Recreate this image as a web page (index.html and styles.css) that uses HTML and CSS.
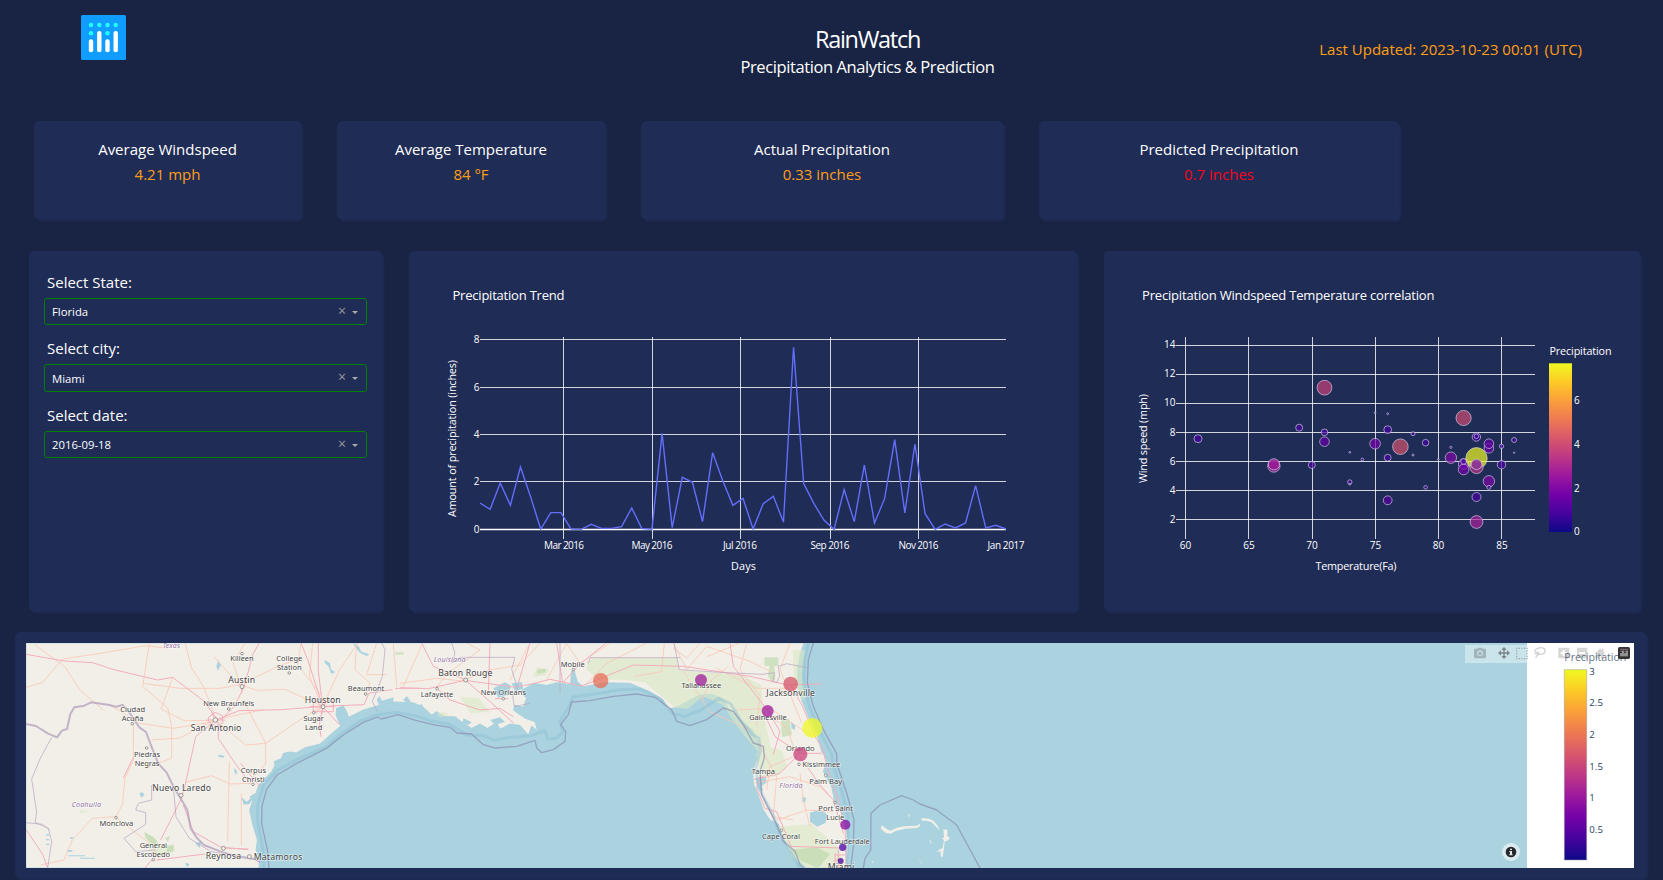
FILE: index.html
```
<!DOCTYPE html>
<html lang="en">
<head>
<meta charset="utf-8">
<title>RainWatch</title>
<link rel="stylesheet" href="styles.css">
</head>
<body>
<header class="header">
  <svg class="logo" viewBox="0 0 45 45" width="45" height="45">
    <rect width="45" height="45" rx="1.5" fill="#119dff"/>
    <g fill="#25fefd"><circle cx="10" cy="10" r="2.2"/><circle cx="18.3" cy="10" r="2.2"/><circle cx="26.5" cy="10" r="2.2"/><circle cx="34.7" cy="10" r="2.2"/><circle cx="10" cy="18.3" r="2.2"/><circle cx="26.5" cy="18.3" r="2.2"/></g>
    <g fill="#fff"><rect x="7.8" y="24.3" width="4.4" height="13" rx="2.1"/><rect x="16.1" y="16" width="4.4" height="21.3" rx="2.1"/><rect x="24.3" y="24.3" width="4.4" height="13" rx="2.1"/><rect x="32.5" y="16" width="4.4" height="21.3" rx="2.1"/></g>
  </svg>
  <div class="titles"><h1>RainWatch</h1><h2>Precipitation Analytics &amp; Prediction</h2></div>
  <div class="updated">Last Updated: 2023-10-23 00:01 (UTC)</div>
</header>

<section class="stats">
  <div class="card stat"><p>Average Windspeed</p><p class="amber">4.21 mph</p></div>
  <div class="card stat"><p>Average Temperature</p><p class="amber">84 °F</p></div>
  <div class="card stat"><p>Actual Precipitation</p><p class="amber">0.33 inches</p></div>
  <div class="card stat"><p>Predicted Precipitation</p><p class="red">0.7 inches</p></div>
</section>

<main class="panels">
  <div class="card filters">
    <label>Select State:</label>
    <div class="select"><span>Florida</span><i class="clear">×</i><i class="arrow"></i></div>
    <label>Select city:</label>
    <div class="select tall"><span>Miami</span><i class="clear">×</i><i class="arrow"></i></div>
    <label>Select date:</label>
    <div class="select"><span>2016-09-18</span><i class="clear">×</i><i class="arrow"></i></div>
  </div>

  <div class="card">
    <svg class="chart" viewBox="409 251 668 360" width="668" height="360">
      <text class="chart-title" x="452.5" y="300" textLength="112">Precipitation Trend</text>
      <path class="grid" d="M480 339.5H1006M480 387.5H1006M480 434.5H1006M480 481.5H1006M563.5 337V539M652.5 337V539M740.5 337V539M830.5 337V539M918.5 337V539"/>
      <path class="zero" d="M480 529.5H1006"/>
      <polyline class="trend" transform="translate(480 240) scale(10.115 .33333)" points="0,789 1,808 2,729 3,796 4,681 5,770 6,867 7,818 8,818 9,867 10,868 11,853 12,865 13,865 14,860 15,804 16,866 17,868 18,580 19,863 20,712 21,727 22,845 23,638 24,722 25,796 26,775 27,867 28,791 29,769 30,846 31,322 32,731 33,790 34,840 35,868 36,749 37,845 38,675 39,849 40,776 41,599 42,819 43,612 44,821 45,868 46,852 47,864 48,849 49,737 50,864 51,856 52,867"/>
      <g class="tick end"><text x="479.5" y="343">8</text><text x="479.5" y="390.5">6</text><text x="479.5" y="438">4</text><text x="479.5" y="485">2</text><text x="479.5" y="533">0</text></g>
      <g class="tick mid"><text x="564" y="549" textLength="40">Mar 2016</text><text x="652" y="549" textLength="41">May 2016</text><text x="740" y="549" textLength="34">Jul 2016</text><text x="830" y="549" textLength="39">Sep 2016</text><text x="918.5" y="549" textLength="40">Nov 2016</text><text x="1006" y="549" textLength="37">Jan 2017</text></g>
      <text class="axis mid" x="743.5" y="570" textLength="25">Days</text>
      <text class="axis mid" transform="translate(456 438.5) rotate(-90)" textLength="157">Amount of precipitation (inches)</text>
    </svg>
  </div>

  <div class="card">
    <svg class="chart" viewBox="1104 251 536 360" width="536" height="360">
      <defs><linearGradient id="plasma" x1="0" y1="1" x2="0" y2="0">
        <stop offset="0" stop-color="#0d0887"/><stop offset=".111" stop-color="#46039f"/><stop offset=".222" stop-color="#7201a8"/><stop offset=".333" stop-color="#9c179e"/><stop offset=".444" stop-color="#bd3786"/><stop offset=".556" stop-color="#d8576b"/><stop offset=".667" stop-color="#ed7953"/><stop offset=".778" stop-color="#fb9f3a"/><stop offset=".889" stop-color="#fdca26"/><stop offset="1" stop-color="#f0f921"/>
      </linearGradient></defs>
      <text class="chart-title" x="1142" y="300" textLength="292.5">Precipitation Windspeed Temperature correlation</text>
      <path class="grid" d="M1176 345.5H1535M1176 374.5H1535M1176 403.5H1535M1176 432.5H1535M1176 461.5H1535M1176 490.5H1535M1176 519.5H1535M1185.5 337V539M1248.5 337V539M1312.5 337V539M1375.5 337V539M1438.5 337V539M1501.5 337V539"/>
      <g class="dots" fill="#46039f">
        <circle cx="1198" cy="438.7" r="4"/>
        <circle cx="1273.9" cy="466" r="6.2" fill="#a8249a"/><circle cx="1273.9" cy="464.3" r="5.6" fill="#a01a9c"/>
        <circle cx="1299.2" cy="427.7" r="3.5"/><circle cx="1311.8" cy="465" r="3.5"/>
        <circle cx="1324.5" cy="387.7" r="7.4" fill="#c9427a"/><circle cx="1324.5" cy="432.3" r="3.3"/><circle cx="1324.5" cy="441.7" r="4.8" fill="#6400a7"/>
        <circle cx="1349.8" cy="452.3" r=".9"/><circle cx="1349.8" cy="482" r="2.2"/><circle cx="1349.8" cy="484.3" r=".9"/><circle cx="1362.4" cy="459.5" r="1.4"/>
        <circle cx="1375.1" cy="412.7" r=".8"/><circle cx="1375.1" cy="443.7" r="5.3" fill="#7201a8"/>
        <circle cx="1387.7" cy="413.7" r=".9"/><circle cx="1387.7" cy="429.7" r="3.9"/><circle cx="1387.7" cy="457.7" r="3.4"/><circle cx="1387.7" cy="500.3" r="4.4" fill="#5402a3"/>
        <circle cx="1400.4" cy="446.7" r="7.8" fill="#d5536f"/>
        <circle cx="1413" cy="433.7" r="2"/><circle cx="1413" cy="455" r="1"/><circle cx="1425.6" cy="442.7" r="3.3"/><circle cx="1425.6" cy="487.3" r="1.8"/>
        <circle cx="1438.3" cy="459.3" r=".9"/><circle cx="1450.9" cy="447.3" r="1.1"/><circle cx="1450.9" cy="457.7" r="5.7" fill="#7e08a5"/>
        <circle cx="1463.6" cy="418" r="7.6" fill="#cf4c74"/><circle cx="1463.6" cy="464" r="5.2" fill="#6a00a8"/><circle cx="1463.6" cy="461.5" r="2.8"/><circle cx="1463.6" cy="469.5" r="5.3" fill="#7201a8"/>
        <circle cx="1476.4" cy="437" r="4.2"/><circle cx="1476.4" cy="436.3" r="2.3"/>
        <circle cx="1476.5" cy="458.3" r="10.7" fill="#f0f921"/><circle cx="1476.5" cy="467" r="6.6" fill="#b83289"/><circle cx="1476.5" cy="464.3" r="5.3" fill="#7e2aa0"/>
        <circle cx="1476.5" cy="497" r="4.5"/><circle cx="1476.5" cy="522" r="6.4" fill="#a8229a"/>
        <circle cx="1488.9" cy="448.3" r="4.8" fill="#6400a7"/><circle cx="1488.9" cy="443.7" r="4.8" fill="#6400a7"/><circle cx="1488.9" cy="481.3" r="5.7" fill="#7e08a5"/><circle cx="1488.9" cy="487.3" r="2"/>
        <circle cx="1501.5" cy="446.3" r="2.2"/><circle cx="1501.5" cy="464.7" r="4.2"/><circle cx="1514.1" cy="440" r="2.5"/><circle cx="1514.1" cy="452.7" r=".7"/>
      </g>
      <g class="tick end"><text x="1175.5" y="348">14</text><text x="1175.5" y="377">12</text><text x="1175.5" y="406">10</text><text x="1175.5" y="436">8</text><text x="1175.5" y="465">6</text><text x="1175.5" y="494">4</text><text x="1175.5" y="523">2</text></g>
      <g class="tick mid"><text x="1185.5" y="549">60</text><text x="1249" y="549">65</text><text x="1312" y="549">70</text><text x="1375.5" y="549">75</text><text x="1438.5" y="549">80</text><text x="1502" y="549">85</text></g>
      <text class="axis mid" x="1356" y="570" textLength="81">Temperature(Fa)</text>
      <text class="axis mid" transform="translate(1147 438.5) rotate(-90)" textLength="89">Wind speed (mph)</text>
      <text class="axis" x="1549.5" y="355" textLength="62">Precipitation</text>
      <rect x="1549" y="363.3" width="23" height="168.7" fill="url(#plasma)"/>
      <g class="tick"><text x="1574" y="403.5">6</text><text x="1574" y="447.5">4</text><text x="1574" y="491.5">2</text><text x="1574" y="535">0</text></g>
    </svg>
  </div>
</main>

<section class="card map-card">
<svg class="map" viewBox="78 69 4824 675" width="1608" height="225">
  <rect x="78" y="69" width="4824" height="675" fill="#aad3df"/>
  <!-- mainland -->
  <g class="land">
    <path d="M78 69V744H777L779 715 768 690 772 660 757 610 749 570 757 545 750 530 768 520 776 495 800 470 815 455 825 435 822 425 845 415 850 400 870 396 890 398 915 383 960 372 990 345 1022 318 1008 285 1010 265 1030 258 1040 275 1045 292 1090 270 1130 258 1160 245 1240 248 1270 262 1295 285 1310 275 1335 290 1365 290 1390 310 1415 325 1440 312 1462 325 1490 308 1500 328 1530 312 1560 316 1585 345 1595 318 1612 332 1605 305 1575 295 1540 270 1545 255 1570 262 1580 235 1560 215 1600 190 1640 196 1670 188 1712 194 1714 155 1722 150 1732 185 1750 200 1820 188 1890 190 1950 215 1990 240 2003 268 2030 262 2070 240 2100 225 2135 222 2165 235 2190 270 2230 310 2258 330 2272 365 2275 400 2258 450 2260 490 2272 520 2290 570 2310 600 2335 612 2345 640 2360 680 2390 715 2420 744H2538L2545 690 2540 630 2525 580 2503 540 2495 500 2470 455 2482 415 2465 395 2450 340 2425 290 2405 240 2393 190 2393 150 2400 105 2412 69Z"/>
  </g>
  <!-- bays and lakes -->
  <g fill="#aad3df">
    <path d="M655 121l8 14-10 17-4-15zM418 520l8-3 8 7-10 9zM655 404l18 3-3 6-14-3zM1058 69l18 10 8 16 24 8-7 5-22-10zM975 120l15 10 3 18 13 8-12 6-8-22-12-12zM1565 210l22-12 80 0 30 10-25 10-30 8-15 20-40 12 8-25zM1480 205l35-18 18 10-8 28-30 8zM1535 190l30-4 5 20-25 8zM1240 260l25-8 6 12-18 10zM1390 295l25 12-10 8-18-6zM1470 300l30-8 15 14-30 8zM1130 240l8-12 8 14 35-10-2 16-40 10zM1210 240l10-12 12 16-10 6z"/>
    <path d="M724 530l15 15 20-15-10 22-18 2zM586 670l18-6-5 20zM205 706h50v3h-50zM240 713h45v3h-45zM202 690h15v5h-15zM138 643h9v4h-9zM138 657h9v4h-9zM138 671h9v4h-9zM210 652h10v4h-10zM2430 578l30-10 22 15-5 25-25 12-22-15zM2268 478l28-8 5 16-15 12 3 16-12-5zM2373 305l12 10v15l-10-5zM2408 530l10 4-3 14-9-5zM2468 395l18 10-3 22-10-15zM703 445l8 8-2 12-6-8zM555 728l14 4-8 10z"/>
  </g>
  <!-- woodland -->
  <g fill="#d9e8c4" opacity=".6">
    <path d="M1762 125l20-11H2030l8 37 185 14 60 30 10 100 20 90-30 20-40-45-45-60-30-46-60-25-45 38-40-5-35-30-55-45-65-8-70 0-38-30zM2268 400l40-20 38 12 15 45-30 30-50 10zM2378 90h38l-10 80 15 60-16 10-22-50zM2335 620l100-8 80 70 20 62h-115l-45-32z"/>
    <path d="M435 635l30 18 18 30 38-12 3 25-60 15-14-25zM1380 230l55 5 35 40-60 5zM1612 140l35 10-10 15-38 5zM1310 280l25-4 10 10-25 6zM235 570l28 3-2 5-20 0z"/>
  </g>
  <g fill="#b9d7a8" opacity=".6"><path d="M2293 112h42v26h-12l3 40-12 12-10-24 4-28h-15zM2343 300l25-4 8 50-30 5zM2370 690l80-8 40 20-35 42-50-20zM432 635l30 18 18 25-22-5-22-20zM495 655l15-8-6 20zM500 678l22-2-2 18-20 4zM1185 97h26v7h-24zM1612 150l26-4-2 10-24 6z"/></g>
  <!-- secondary roads -->
  <g class="minor">
    <path d="M78 202l50-15 60-70 100-15 150-25 65 8M105 75l90 65 45 70 70 60M448 69l-20 130 75 65 12 55 0 95-75 30M430 190l110 15h120l55-10 130-60 58-20M518 172l-35 95 70 35h72M555 69l20 75 35 55 20 50 17 50M330 255l90 55 100 15 122-20M455 360l85-6 105-55 145-30M647 300l90 75 60-5 95-65 70-45M735 69l-35 60 20 65 50 17 85-3 110 50M722 200l-80-90M735 250l62 120v60l-45 50M688 425l-5 240M724 520l0 155M555 487l80-20 55 25 65-2M400 310v110l-25 55-8 80-20 35-70 5-60 65-25 60-70 15M348 592l110 85 20 45M903 69l-10 65 70 90M968 260l-40-90 10-100M968 260l50-110 55-80M1070 69l-5 80 45 40-12 35M1130 69l-30 95 60 0M1180 69l10 130M1210 200l55-125M1200 190l110-15 95 10M1310 200l40-45 90-65-40-21M1390 180l80-30 90-15 60-66M1530 180l60-110M1640 180l60-110 40 60 90-61M1760 190l60-60 120-61M1900 170l85-15 8-86M2020 69l40 80 60-70 130 45 60 30M2100 69l-40 45-40-30M2120 110l100-41M2185 140l-50 40-30 60M2240 69l-20 80 60 80-10 90M2150 145l120 60 100 0M2050 155l80 120 120 55M2210 270l100-5 60 40 60 40M2290 280l70 40 30 90M2270 360l60 110-10 120 60 10M2260 490l110-20 90 30 30 30M2300 510l10-70 70-30M2400 460l10 80 20 80M2330 600l90-30 80 5M2370 69l-30 80 35 85 30 75"/>
  </g>
  <!-- main roads -->
  <g class="major">
    <path d="M78 103l115 20 85 5 60 20 135 32 45-8 55 42 40 30 35 50M778 69l-20 35-25 95-30 60-40 40M647 300l70-28 130-3 120-10 125-5 15-35 70-10M955 69v85l13 105 50 55M903 69l20 50 45 140M968 260l-10 55 5 35M647 300l-60 50-35 160-10 30-60 120M655 320v35l50 75 45 60M780 500l-58-70M78 628l50 75 15 40M400 412l-30 62M455 720l-20 24M470 720l145-18M550 555l30 80 85 48 80 5M670 683l75 5M1200 203l85 3 110-25 145 20 50-8 60-15 95 20 45-18 110-45 150 4 200 30 110 25 105-2M1310 205l40 35 90 30 60-5 40 25M1396 180l80 70 65 60M1265 69l35 70 95 40M1470 69l-5 150M1590 69l-35 120M1670 69l18 120 50-55 80-65M1185 205h75M2190 69l10 70 105 135 35 60-20 70M2373 195l35 65 40 95 20 30 15 65 30 85 22 85 5 140M2290 275l35 75 75 50 65 0M2400 400l-60 60-60 15-10 30 25 60 35 10 25 60 18 44 145 5M2400 410l60 85 40 45 30 100"/>
    <path d="M940 245h60v30h-60zM930 260h75M968 235v45M945 240l45 42M945 280l45-42M625 292l20-15 22 10 2 22-20 10-22-12zM725 190v30M620 300h55M635 278l25 45M2505 700v44M2515 690v54M2505 705h30M2505 720h25M1485 236h40M2262 478l28-8"/>
  </g>
  <!-- borders -->
  <g class="border">
    <path class="thick" d="M78 312l30 6 35 22 28 12 15-20 15-5 10-45 12-20 30-5 20-10 55 8 20 5 20-5 20 22 30 45 20 14 15 40 22 55 25 27 22 45 20 32 20 35 10 55 20 30 20 20 50 20 40 12 60 10 20 10"/>
    <path d="M155 352l-35 65-25 60 15 100-5 30 40 18 10 40-12 79M78 608l50 5 20 16M455 495l0 45-40 10-8 20 30 8 0 35-65 42 35 40 60-5M520 500l8 90 40 65 65 40 60 10M1145 69l10 20-8 80-15 40-15 35 15 30M1355 69l10 30-10 30 25-17h165l-10 35 18 60-15 18 5 35 45-10M1680 69v150M1765 130l5-17h270M2022 69l16 80 120 8 130 6 35-5-4 25 10 6 10-20-4-30 25-8 60 12"/>
  </g>
  <!-- territorial waters -->
  <g class="border">
    <path class="shelf" d="M792 744l-4-60-15-80 0-50 18-60 40-42 60-33 90-40 45-40 60-38 42-16 60-8 56 10 50 16 50 8 60 35 45 0 35 15 35-8 75-6 40-15 10 25 25-2 20-20-10-30 30-50 10-24 70-10 70-12 60-2 60 28 38 45 35 10 50-20 55-35 35 16 30 50 35 42 20 12 3 40-12 45 6 60 45 85 22 60 28 45 30 55M2425 69l-12 55-2 70 18 68 30 70 38 75v20l28 85 20 80-2 80-4 70"/>
    <path class="coast" d="M807 744l-4-50-18-84 1-52 14-50 31-43 59-35 90-45 50-40 60-38 42-16 12 6 50-13 56 18 50 12 50 8 20 17 45 3 35 32 35 10 65-5 55-18 5 23 15 14 35-9 35-25 2-30-15-20 23-30 10-38 55-4 70-13 70-7 55 10 50 37 15 35 40 13 50-18 50-35 30 10 30 40 30 55 30 10 3 35-13 40 5 70 45 90 20 50 35 30 15 40 20 20 15 1"/>
    <path class="coast" d="M2440 69l-15 50-3 70 18 70 30 70 40 72v28l30 90 22 81-2 80-8 64M2590 744l5-29 17-25 1-110 27-25 65-28 35 13 20 12 50 18 60 45 70 129"/>
  </g>
  <!-- islands -->
  <g fill="#f2efe9"><path d="M2645 616l14 10 12 6 18-8 22-5 40-2 8-6 2 6-10 7-36 2-26 6-18 9-14-2-14-12zM2764 594l22 2 14 6 12 14 8 16-14-14-12-12-14-4-14 0zM2830 628l12 2 0 18 8 6-8 8-8 2-2 20-4 28-6-4 0-14-12 2 10-8 8-4 4-24-6-4 6-4z"/><path d="M2724 582l4 0 2 8-4 0zM2788 658l4 2 4 12-4-2zM2756 720l4 2 8 10-4-2zM2615 722l4 2 2 6-4-2z" opacity=".8"/></g>
  <!-- place markers -->
  <g fill="#f2efe9" stroke="#888" stroke-width="2.5"><circle cx="726" cy="200" r="6"/><circle cx="646" cy="300" r="7"/><circle cx="969" cy="260" r="6"/><circle cx="543" cy="526" r="6"/><circle cx="670" cy="685" r="6"/><circle cx="748" cy="710" r="6"/><circle cx="1397" cy="180" r="6"/><circle cx="726" cy="101" r="4"/><circle cx="868" cy="159" r="4"/><circle cx="686" cy="267" r="4"/><circle cx="397" cy="311" r="4"/><circle cx="440" cy="384" r="4"/><circle cx="348" cy="593" r="4"/><circle cx="460" cy="719" r="4"/><circle cx="759" cy="493" r="4"/><circle cx="941" cy="278" r="4"/><circle cx="1097" cy="222" r="4"/><circle cx="1311" cy="206" r="4"/><circle cx="1510" cy="236" r="4"/><circle cx="1720" cy="149" r="4"/><circle cx="2397" cy="433" r="4"/><circle cx="2477" cy="466" r="4"/><circle cx="2505" cy="548" r="4"/><circle cx="2344" cy="631" r="4"/></g>
  <!-- place names -->
  <g class="city big">
    <text x="725" y="188" textLength="80">Austin</text><text x="648" y="332" textLength="152">San Antonio</text><text x="968" y="248" textLength="108">Houston</text><text x="545" y="514" textLength="176">Nuevo Laredo</text><text x="670" y="718" textLength="106">Reynosa</text><text x="834" y="719" textLength="146">Matamoros</text><text x="1396" y="167" textLength="163">Baton Rouge</text><text x="2372" y="227" textLength="146">Jacksonville</text><text x="2523" y="751" textLength="80">Miami</text>
  </g>
  <g class="city">
    <text x="726" y="124" textLength="70">Killeen</text><text x="868" y="123" textLength="78">College</text><text x="868" y="150" textLength="74">Station</text><text x="686" y="258" textLength="153">New Braunfels</text><text x="398" y="276" textLength="74">Ciudad</text><text x="398" y="303" textLength="65">Acuña</text><text x="441" y="411" textLength="78">Piedras</text><text x="441" y="438" textLength="74">Negras</text><text x="349" y="618" textLength="101">Monclova</text><text x="460" y="683" textLength="82">General</text><text x="460" y="710" textLength="101">Escobedo</text><text x="760" y="458" textLength="76">Corpus</text><text x="760" y="485" textLength="68">Christi</text><text x="941" y="304" textLength="61">Sugar</text><text x="941" y="331" textLength="52">Land</text><text x="1098" y="213" textLength="109">Beaumont</text><text x="1311" y="232" textLength="98">Lafayette</text><text x="1510" y="226" textLength="136">New Orleans</text><text x="1718" y="141" textLength="72">Mobile</text><text x="2104" y="205" textLength="119">Tallahassee</text><text x="2304" y="299" textLength="113">Gainesville</text><text x="2401" y="394" textLength="86">Orlando</text><text x="2464" y="440" textLength="114">Kissimmee</text><text x="2290" y="463" textLength="70">Tampa</text><text x="2477" y="493" textLength="98">Palm Bay</text><text x="2507" y="574" textLength="104">Port Saint</text><text x="2506" y="601" textLength="54">Lucie</text><text x="2343" y="658" textLength="114">Cape Coral</text><text x="2527" y="673" textLength="165">Fort Lauderdale</text>
  </g>
  <g class="city state"><text x="514" y="83" textLength="52">Texas</text><text x="259" y="562" textLength="88">Coahuila</text><text x="1349" y="126" textLength="96">Louisiana</text><text x="2373" y="503" textLength="70">Florida</text></g>
  <!-- readings -->
  <g opacity=".75"><circle cx="1802" cy="182" r="23" fill="#e76f5a"/><circle cx="2103" cy="180" r="18" fill="#a11b9b"/><circle cx="2372" cy="192" r="22" fill="#d8576b"/><circle cx="2303" cy="273" r="18" fill="#a11b9b"/><circle cx="2437" cy="324" r="30" fill="#f0f921"/><circle cx="2401" cy="403" r="21" fill="#c9437b"/><circle cx="2536" cy="614" r="15" fill="#8a0ba4"/><circle cx="2528" cy="682" r="11" fill="#4c02a1"/><circle cx="2522" cy="723" r="9" fill="#46039f"/></g>
  <!-- legend -->
  <rect x="4581" y="69" width="321" height="675" fill="#fff"/>
  <rect x="4395" y="75" width="186" height="54" fill="#fff" opacity=".38"/>
  <rect x="4693" y="149" width="67" height="571" fill="url(#plasma)" stroke="#999" stroke-opacity=".5" stroke-width="3"/>
  <g class="legend-label"><text x="4768" y="164">3</text><text x="4768" y="257">2.5</text><text x="4768" y="353">2</text><text x="4768" y="449">1.5</text><text x="4768" y="543">1</text><text x="4768" y="638">0.5</text></g>
  <text class="legend-title" x="4693" y="123" textLength="186">Precipitation</text>
  <!-- toolbar -->
  <g transform="translate(4260 0)" fill="#444">
    <path opacity=".3" fill-rule="evenodd" d="M162 90q0-4 4-4h6l2-3h12l2 3h6q4 0 4 4v21q0 4-4 4h-28q-4 0-4-4zM180 91a9 9 0 1 0 .1 0zM180 95a5.500 5.500 0 1 1-.1 0z"/>
    <path opacity=".22" fill-rule="evenodd" d="M415 83h33v32h-33zM428 90v6h-6v6h6v6h6v-6h6v-6h-6v-6zM471 83h31v32h-31zM477 96v6h18v-6zM525 101l15-16 6 6v-5h5v10l5 5h-4v14h-9v-10h-7v10h-9v-14z"/>
    <path opacity=".35" d="M288 83h4v4h-4zM296 83h4v4h-4zM304 83h4v4h-4zM312 83h4v4h-4zM320 83h4v4h-4zM288 91h4v4h-4zM288 99h4v4h-4zM288 107h4v4h-4zM288 114h4v4h-4zM296 114h4v4h-4zM304 114h4v4h-4zM312 114h4v4h-4zM320 114h4v4h-4zM320 91h4v4h-4zM320 99h4v4h-4zM320 107h4v4h-4z"/>
    <path opacity=".25" fill="none" stroke="#444" stroke-width="4" d="M349 103q-9-8-1-15 12-9 25-2 6 9-3 15-9 4-17 1-6-6 1-5 5 2 0 7-5 4-7 9"/>
    <path opacity=".6" d="M252 81l8 9h-6v7h7v-6l9 8-9 8v-6h-7v7h6l-8 9-8-9h6v-7h-7v6l-9-8 9-8v6h7v-7h-6z"/>
  </g>
  <rect x="4854" y="81" width="36" height="36" rx="5" fill="#333"/>
  <path d="M4863 99v10M4869 92v17M4875 99v10M4881 92v17" stroke="#eee" stroke-width="3"/><path d="M4862 88h22M4862 94h3M4874 94h3" stroke="#d59bb3" stroke-width="3" stroke-dasharray="3 3"/>
  <circle cx="4533" cy="696" r="27" fill="#fff" opacity=".55"/><circle cx="4533" cy="696" r="16" fill="#282828"/><path d="M4530 686h6v4h-6zM4528 693h8v10h2v3h-10v-3h2v-7h-2z" fill="#dbeaf0"/>
</svg>
</section>
</body>
</html>
```
FILE: styles.css
```
* { box-sizing: border-box; }
body {
  margin: 0;
  width: 1663px;
  height: 880px;
  overflow: hidden;
  background: #192444;
  color: #fff;
  font-family: "Open Sans", "Noto Sans", sans-serif;
}
h1, h2, p { margin: 0; font-weight: 400; }
.card {
  background: #1f2c56;
  border-radius: 5px;
  box-shadow: 2px 2px 2px #1f2c56;
}

.header {
  display: grid;
  grid-template-columns: 1fr 400px 1fr;
  height: 121px;
  padding: 15px 81px 0 81px;
}
.logo { display: block; }
.titles { text-align: center; padding: 8px 0 0 72px; white-space: nowrap; }
.titles h1 { font-size: 23.5px; line-height: 32px; letter-spacing: -1.3px; }
.titles h2 { font-size: 16.5px; line-height: 24px; letter-spacing: -0.4px; }
.updated { color: #ff9f14; font-size: 15px; line-height: 24px; padding-top: 22px; text-align: right; }

.stats {
  display: grid;
  grid-template-columns: 267px 268px 362px 360px;
  column-gap: 36px;
  padding-left: 34px;
  height: 98px;
}
.stat { padding-top: 16px; text-align: center; font-size: 15px; line-height: 25px; }
.amber { color: #ff9f14; }
.red { color: #f5061d; }

.panels {
  display: grid;
  grid-template-columns: 353px 668px 536px;
  column-gap: 27px;
  height: 360px;
  margin: 32px 0 0 29px;
}
.filters { padding: 18px 15px 0 15px; }
.filters label { display: block; height: 29px; padding-left: 3px; font-size: 15px; line-height: 26px; }
.select {
  display: flex;
  align-items: center;
  height: 27px;
  margin-bottom: 10px;
  padding: 0 8px 0 7px;
  border: 1px solid green;
  border-radius: 3px;
  font-size: 11.3px;
}
.select.tall { height: 28px; }
.select span { flex: 1; }
.clear { width: 14px; color: #999; font-style: normal; font-size: 14px; line-height: 20px; margin-top: -2px; }
.arrow { border: 3px solid transparent; border-top-color: #aaa; border-bottom: 0; margin-top: 1px; }

.chart { display: block; }
.chart text { fill: #fff; }
.chart-title { font-size: 13px; }
.tick { font-size: 10px; }
.axis { font-size: 10.8px; }
.mid { text-anchor: middle; }
.end { text-anchor: end; }
.grid { fill: none; stroke: #fff; stroke-width: 1; opacity: .8; }
.zero { stroke: #fff; stroke-width: 1.3; }
.trend { fill: none; stroke: #636efa; stroke-width: 1.4; vector-effect: non-scaling-stroke; }
.dots circle { fill-opacity: .7; stroke: #d5d0e8; stroke-opacity: .65; stroke-width: 1; }

.map-card { width: 1631px; height: 246px; margin: 21px 0 0 15px; padding: 11px; }
.map { display: block; }
.land { fill: #f2efe9; stroke: #9fcbd9; stroke-width: 2; }
.minor, .major { fill: none; stroke-linejoin: round; }
.minor { stroke: #fac8b4; stroke-width: 2.5; }
.major { stroke: #f4aebb; stroke-width: 3; }
.border path { fill: none; stroke: #b8a5c0; stroke-width: 3; stroke-linejoin: round; opacity: .7; }
.border .thick { stroke: #ae9ab9; stroke-width: 6; }
.border .coast { stroke: #8c8eb2; stroke-width: 4; }
.border .shelf { stroke: #8fbfd2; stroke-width: 9; opacity: .45; }
.city text {
  fill: #444;
  font-size: 22.5px;
  text-anchor: middle;
  font-family: "Noto Sans", sans-serif;
  paint-order: stroke;
  stroke: #fff;
  stroke-opacity: .6;
  stroke-width: 4px;
}
.city.big text { font-size: 26px; }
.city.state text { fill: #9473a5; font-size: 21.5px; font-style: italic; }
.legend-label { font-size: 29px; fill: #2a3f5f; }
.legend-title { font-size: 32px; fill: #2a3f5f; fill-opacity: .75; }
```
